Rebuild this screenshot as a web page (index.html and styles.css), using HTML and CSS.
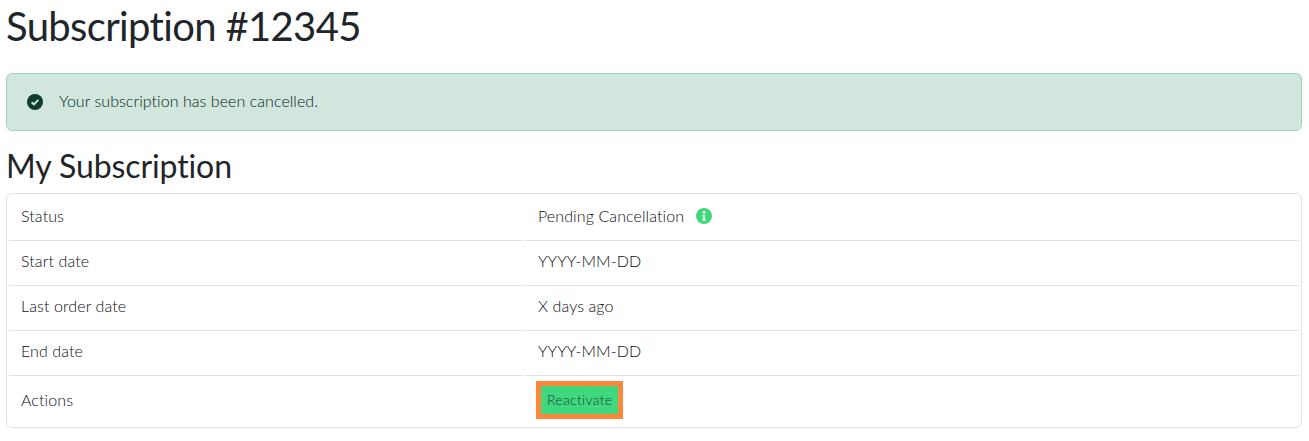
FILE: index.html
```html
<!DOCTYPE html>
<html lang="en">

<head>
    <meta charset="utf-8">
    <title>Subscription #12345</title>
    <link rel="stylesheet" href="styles.css">
</head>

<body>
    <div class="container">
        <h1>Subscription #12345</h1>
        <div class="alert">
            <svg class="alert-icon" viewBox="0 0 16 16" width="16" height="16">
                <circle cx="8" cy="8" r="8" fill="#0f3d2b"/>
                <path d="M4.6 8.3l2.3 2.2 4.4-4.6" fill="none" stroke="#d1e7dd" stroke-width="1.9"/>
            </svg>
            <span class="alert-text">Your subscription has been cancelled.</span>
        </div>
        <h2>My Subscription</h2>
        <div class="card">
            <div class="row">
                <div class="cell">Status</div>
                <div class="cell">Pending Cancellation
                    <svg class="info-icon" viewBox="0 0 16 16" width="16" height="16">
                        <circle cx="8" cy="8" r="8" fill="#3fd87c"/>
                        <circle cx="8" cy="4.4" r="1.3" fill="#fff"/>
                        <path d="M6.3 7h2.6v4.2h1v1.3H6.2v-1.3h1.1V8.300H6.3z" fill="#fff"/>
                    </svg>
                </div>
            </div>
            <div class="row">
                <div class="cell">Start date</div>
                <div class="cell">YYYY-MM-DD</div>
            </div>
            <div class="row">
                <div class="cell">Last order date</div>
                <div class="cell">X days ago</div>
            </div>
            <div class="row">
                <div class="cell">End date</div>
                <div class="cell">YYYY-MM-DD</div>
            </div>
            <div class="row row-last">
                <div class="cell">Actions</div>
                <div class="cell"><a href="#" class="btn">Reactivate</a></div>
            </div>
        </div>
    </div>
</body>

</html>
```

FILE: styles.css
```css
body{
    margin: 0;
    padding: 0;
    background-color: #fff;
    color: #0b0e11;
    font-family: 'Lato', sans-serif;
    font-size: 16px;
    font-weight: 300;
}
.container{
    padding: 0 7px 0 6px;
}
h1{
    margin: 0;
    height: 73px;
    padding-top: 2px;
    box-sizing: border-box;
    font-size: 40px;
    line-height: 48px;
    font-weight: 400;
    letter-spacing: -0.65px;
    color: #212529;
}
h2{
    margin: 0;
    height: 62px;
    padding-top: 16px;
    box-sizing: border-box;
    font-size: 32px;
    line-height: 38px;
    font-weight: 400;
    letter-spacing: -0.1px;
    color: #212529;
}
.alert{
    display: flex;
    align-items: center;
    gap: 16px;
    height: 58px;
    box-sizing: border-box;
    padding: 0 20px;
    background-color: #d1e7dd;
    border: 1px solid #a3cfbb;
    border-radius: 6px;
    color: #06231a;
}
.alert-text{
    padding-bottom: 4px;
    letter-spacing: 0.05px;
}
.card{
    border: 1px solid #dee2e6;
    border-radius: 6px;
    padding: 2px;
    height: 235px;
    box-sizing: border-box;
}
.row{
    display: grid;
    grid-template-columns: 515px 1fr;
    column-gap: 2px;
    height: 45px;
}
.cell{
    display: flex;
    align-items: center;
    padding-left: 12px;
    padding-bottom: 6px;
    border-bottom: 1px solid #dee2e6;
    letter-spacing: 0.1px;
}
.row-last{
    height: 49px;
}
.row-last .cell{
    padding-bottom: 2px;
    border-bottom: 0;
}
.info-icon{
    margin-left: 12px;
    margin-top: 2px;
}
.btn{
    display: block;
    margin-left: -2px;
    padding: 0 6px;
    height: 28px;
    line-height: 28px;
    font-size: 14px;
    letter-spacing: 0.3px;
    color: #1f3f4f;
    text-decoration: none;
    background-color: #3fd87c;
    border: 5px solid #fd873a;
}
```
